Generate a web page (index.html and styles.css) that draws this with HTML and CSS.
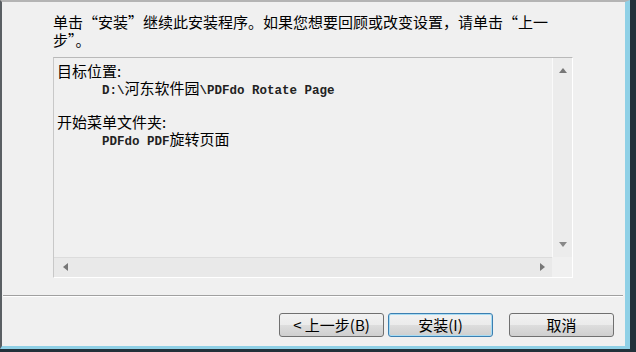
FILE: index.html
```html
<!DOCTYPE html>
<html lang="zh-CN">
<head>
    <meta charset="UTF-8">
    <title>安装</title>
    <link rel="stylesheet" href="styles.css">
</head>
<body>

<div class="dialog">
    <div class="inner">
        <!-- header text -->
        <div class="content">
            <p class="intro">单击“安装”继续此安装程序。如果您想要回顾或改变设置，请单击“上一<br>步”。</p>

            <!-- summary box -->
            <div class="summary">
                <div class="summary-text">
                    <div class="line">目标位置:</div>
                    <div class="line value"><span class="mono">D:\</span>河东软件园<span class="mono">\PDFdo Rotate Page</span></div>
                    <div class="line">&nbsp;</div>
                    <div class="line">开始菜单文件夹:</div>
                    <div class="line value"><span class="mono">PDFdo PDF</span>旋转页面</div>
                </div>
                <div class="vscroll">
                    <span class="arrow up"></span>
                    <span class="arrow down"></span>
                </div>
                <div class="hscroll">
                    <span class="arrow left"></span>
                    <span class="arrow right"></span>
                </div>
                <div class="corner"></div>
            </div>
        </div>

        <div class="separator"></div>

        <!-- buttons -->
        <div class="buttons">
            <button class="btn">&lt; 上一步(B)</button>
            <button class="btn default">安装(I)</button>
            <button class="btn cancel">取消</button>
        </div>
    </div>
</div>

</body>
</html>
```

FILE: styles.css
```css
body {
    margin: 0;
    width: 636px;
    height: 352px;
    overflow: hidden;
    font-family: "Noto Sans CJK SC", "Liberation Sans", sans-serif;
    color: #000;
    background-color: #1f2c33;
}
.dialog {
    width: 636px;
    height: 352px;
    box-sizing: border-box;
    border-right: 6px solid #22313a;
    border-bottom: 3px solid #22313a;
    background-color: #1f2c33;
}
.inner {
    height: 100%;
    box-sizing: border-box;
    background-color: #f0f0f0;
    border-left: 2px solid #5a5f63;
    border-right: 5px solid #8fd0e6;
    border-bottom: 3px solid #8fd0e6;
    border-top: 2px solid #b4b4b4;
}
.content {
    padding: 11px 0 0 51px;
}
.intro {
    margin: 0;
    font-size: 15px;
    line-height: 18px;
    white-space: nowrap;
}
.summary {
    margin-top: 8px;
    width: 520px;
    height: 221px;
    box-sizing: border-box;
    border: 1px solid #fff;
    border-top-color: #b9b9b9;
    border-left-color: #c8c8c8;
    display: grid;
    grid-template-columns: 1fr 20px;
    grid-template-rows: 1fr 20px;
}
.summary-text {
    padding: 4px 3px;
    font-size: 15px;
    line-height: 17px;
    overflow: hidden;
}
.line {
    white-space: nowrap;
    height: 17px;
}
.value {
    padding-left: 45px;
}
.mono {
    font-family: "Liberation Mono", monospace;
    font-size: 12.5px;
    font-weight: bold;
    color: #222;
}
.vscroll, .hscroll {
    position: relative;
    background-color: #ececec;
}
.vscroll {
    border-left: 1px solid #fafafa;
}
.hscroll {
    border-top: 1px solid #dcdcdc;
    background-color: #e9e9e9;
}
.corner {
    background-color: #f0f0f0;
}
.arrow {
    position: absolute;
    width: 0;
    height: 0;
    border: 4px solid transparent;
}
.arrow.up {
    top: 10px;
    left: 6px;
    border-bottom: 5px solid #777;
    border-top: 0;
}
.arrow.down {
    bottom: 10px;
    left: 6px;
    border-top: 5px solid #888;
    border-bottom: 0;
}
.arrow.left {
    top: 5px;
    left: 9px;
    border-right: 5px solid #777;
    border-left: 0;
}
.arrow.right {
    top: 5px;
    right: 7px;
    border-left: 5px solid #777;
    border-right: 0;
}
.separator {
    margin: 17px 0 0 1px;
    width: 620px;
    border-top: 1px solid #a0a0a0;
    border-bottom: 1px solid #fff;
}
.buttons {
    display: flex;
    justify-content: flex-end;
    padding: 16px 11px 0 0;
    gap: 4px;
}
.btn {
    width: 105px;
    height: 24px;
    box-sizing: border-box;
    padding: 0;
    border: 1px solid #707070;
    border-radius: 3px;
    background: linear-gradient(#f2f2f2 0%, #ebebeb 50%, #dddddd 51%, #cfcfcf 100%);
    font-family: "Noto Sans CJK SC", sans-serif;
    font-size: 15px;
    line-height: 20px;
    color: #000;
}
.btn.default {
    border-color: #3c7fb1;
    box-shadow: inset 0 0 0 1px #a8dcf3;
}
.btn.cancel {
    margin-left: 12px;
}
```
